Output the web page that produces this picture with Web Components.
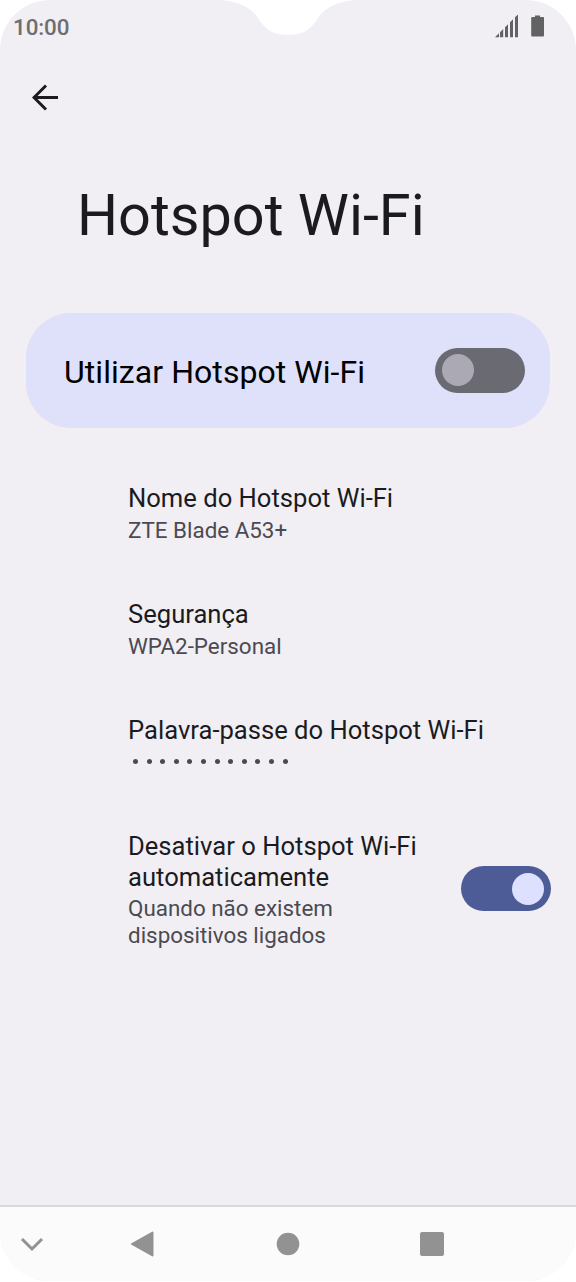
<!DOCTYPE html>
<html lang="pt">
<head>
<meta charset="utf-8">
<title>Hotspot Wi-Fi</title>
<style>
html,body{margin:0;background:#fff}
body{font-family:Roboto,"Liberation Sans",sans-serif}
</style>
</head>
<body>
<phone-screen>
  <status-bar slot="status" time="10:00"></status-bar>
  <page-header>Hotspot Wi-Fi</page-header>
  <main-switch>Utilizar Hotspot Wi-Fi<toggle-switch slot="control"></toggle-switch></main-switch>
  <preference-list>
    <preference-item><span slot="title">Nome do Hotspot Wi-Fi</span><span slot="summary">ZTE Blade A53+</span></preference-item>
    <preference-item><span slot="title">Segurança</span><span slot="summary">WPA2-Personal</span></preference-item>
    <preference-item><span slot="title">Palavra-passe do Hotspot Wi-Fi</span><password-dots slot="summary" count="12"></password-dots></preference-item>
    <preference-item><span slot="title">Desativar o Hotspot Wi-Fi<br>automaticamente</span><span slot="summary">Quando não existem<br>dispositivos ligados</span><toggle-switch slot="control" on></toggle-switch></preference-item>
  </preference-list>
  <navigation-bar slot="navigation"></navigation-bar>
</phone-screen>
<script>
const define = (name, markup, setup) => customElements.define(name, class extends HTMLElement {
  constructor() {
    super();
    this.attachShadow({mode: 'open'}).innerHTML = markup;
  }
  connectedCallback() { if (setup) setup(this, this.shadowRoot); }
});

define('phone-screen', `<style>
:host{display:flex;flex-direction:column;position:relative;width:576px;height:1281px;overflow:hidden;border-radius:50px;background:#f1eff3}
main{flex:1;min-height:0}
.notch{position:absolute;left:220px;top:0}
</style>
<slot name="status"></slot><main><slot></slot></main><slot name="navigation"></slot>
<svg class="notch" width="136" height="36" viewBox="0 0 136 36"><path d="M0 0C17 1 31 7 38 18C45 29 53 35 68 35S91 29 98 18C105 7 119 1 136 0Z" fill="#fff"/></svg>`);

define('status-bar', `<style>
:host{display:flex;justify-content:space-between;align-items:center;box-sizing:border-box;height:54px;padding:0 31px 0 13px;color:#6e6d70;font-size:22.4px;font-weight:500;letter-spacing:-.1px}
.icons{display:flex;align-items:center;gap:12.500px;margin-bottom:2px}
svg{display:block}
</style><span></span><div class="icons">
<svg width="24" height="24" viewBox="0 0 24 24" fill="#626164"><path d="M0 23.3L4 19.3V23.3ZM5 18.2L8.2 15V23.3H5ZM10 13.2L13 10.2V23.3H10ZM15 8.2L18 5.2V23.3H15ZM20 3.2L23 .4V23.3H20Z"/></svg>
<svg width="14" height="24" viewBox="0 0 14 24" fill="#626164"><path d="M4 3V1.500H9V3H12Q13 3 13 4V21.500Q13 22.500 12 22.500H1.200Q.2 22.500 .2 21.500V4Q.2 3 1.200 3Z"/></svg>
</div>`, (el, root) => root.querySelector('span').textContent = el.getAttribute('time'));

define('page-header', `<style>
:host{display:block;padding:27px 32px 0}
svg{display:block}
h1{margin:67px 0 0 45px;font-size:57.6px;line-height:68px;font-weight:400;color:#1b1b1f}
</style><svg width="27" height="34" viewBox="0 0 27 34" fill="none" stroke="#1b1b1f" stroke-width="3"><path d="M26 16.500H2M14 4.500L2 16.500L14 28.500"/></svg><h1><slot></slot></h1>`);

define('main-switch', `<style>
:host{display:flex;align-items:center;justify-content:space-between;box-sizing:border-box;height:115px;margin:62.500px 26px 0;padding:0 25px 0 38px;border-radius:45px;background:#dfe0f9;color:#000;font-size:32px;line-height:38px;letter-spacing:.06px}
.label{padding-top:3px}
</style><span class="label"><slot></slot></span><slot name="control"></slot>`);

define('toggle-switch', `<style>
:host{display:flex;flex:none;align-items:center;box-sizing:border-box;width:90px;height:45px;padding:0 6.500px;border-radius:23px;background:#6a6a72}
i{width:32px;height:32px;border-radius:50%;background:#aba9b4}
:host([on]){justify-content:flex-end;background:#4d5b97}
:host([on]) i{background:#dee0ff}
</style><i></i>`);

define('preference-list', `<style>:host{display:flex;flex-direction:column;margin:27px 25.500px 0 128px}</style><slot></slot>`);

define('preference-item', `<style>
:host{display:flex;justify-content:space-between;align-items:center;box-sizing:border-box;min-height:116px;padding:27.500px 0}
.title{padding-top:1px;font-size:25.6px;line-height:30.500px;color:#1b1b1f}
.summary{margin-top:3px;font-size:22.4px;line-height:26.500px;color:#4b4a52}
::slotted(toggle-switch){margin-bottom:1px}
</style><div><div class="title"><slot name="title"></slot></div><div class="summary"><slot name="summary"></slot></div></div><slot name="control"></slot>`);

define('password-dots', `<style>
:host{display:flex;gap:8.600px;height:26.500px;padding-left:5px;align-items:center}
i{width:5px;height:5px;border-radius:50%;background:#4b4a52}
</style>`, (el, root) => {
  for (let n = +el.getAttribute('count'); n > 0; n--) root.append(document.createElement('i'));
});

define('navigation-bar', `<style>
:host{display:grid;grid-template-columns:64px 156px 136px 152px;box-sizing:border-box;height:76px;padding-bottom:1px;border-top:2px solid #d9d8da;background:#fbfbfb;align-items:center;justify-items:center}
svg{display:block}
</style>
<svg width="24" height="24" viewBox="0 0 24 24" fill="none" stroke="#929292" stroke-width="3"><path d="M2 7L12 17L22 7"/></svg>
<svg width="28" height="28" viewBox="0 0 28 28" fill="#929292" stroke="#929292" stroke-width="2" stroke-linejoin="round"><path d="M4 14L24.500 2.500V25.500Z"/></svg>
<svg width="24" height="24" viewBox="0 0 24 24"><circle cx="12" cy="12" r="11.300" fill="#929292"/></svg>
<svg width="24" height="24" viewBox="0 0 24 24"><rect width="24" height="24" rx="2" fill="#929292"/></svg>`);
</script>
</body>
</html>
